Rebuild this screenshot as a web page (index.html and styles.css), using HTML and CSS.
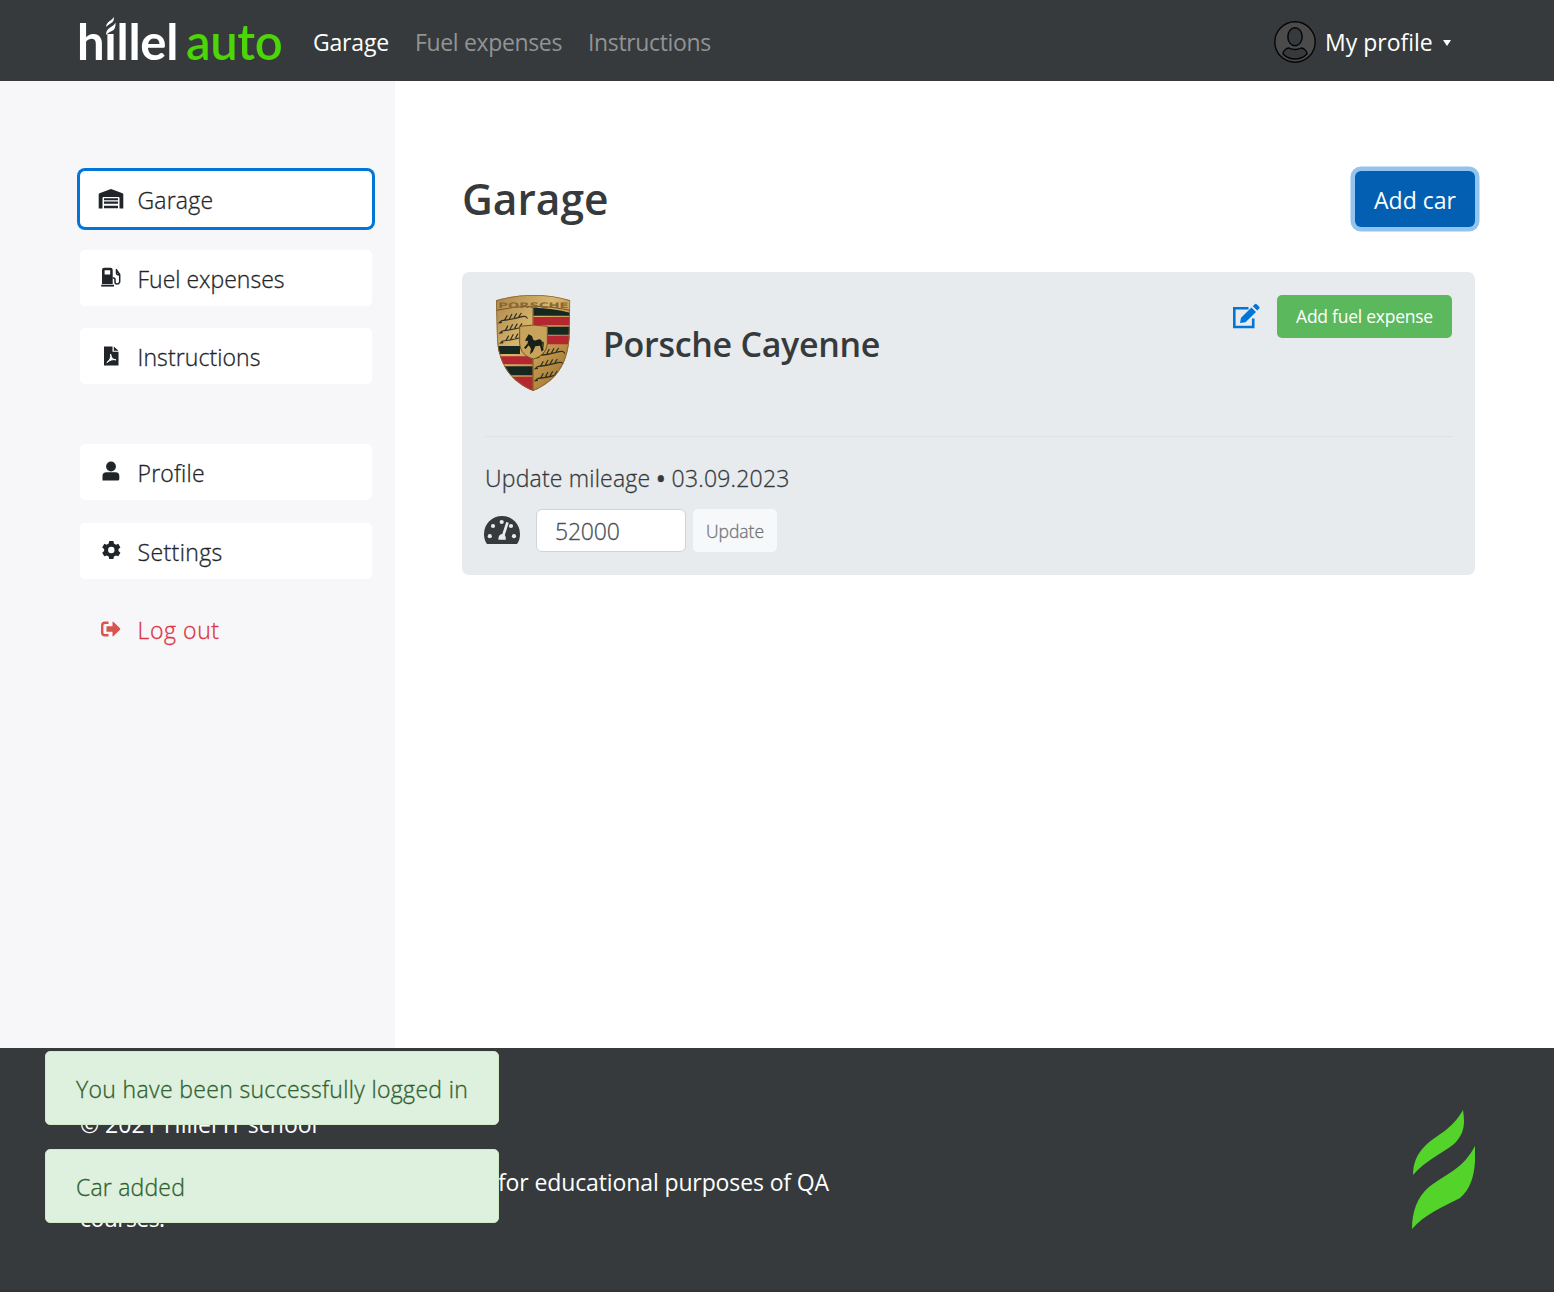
FILE: index.html
```html
<!DOCTYPE html>
<html lang="en">
<head>
<meta charset="utf-8">
<title>Hillel auto</title>
<link rel="stylesheet" href="styles.css">
</head>
<body>
<header class="header">
  <a class="logo"><span class="logo-name">hıllel</span><span class="logo-auto">auto</span>
    <svg class="logo-flame" viewBox="0 0 63 119"><path d="M51 0C40 20 24 25 13 36C5 44 1 53 1 65C14 50 31 43 42 34C53 23 53 13 51 0ZM63 36C51 59 35 63 17 77C5 87 0 102 0 119C13 104 31 97 48 88C62 76 64 56 63 36Z"/></svg>
  </a>
  <nav class="nav"><a class="nav-link active n1">Garage</a><a class="nav-link n2">Fuel expenses</a><a class="nav-link n3">Instructions</a></nav>
  <button class="profile">
    <svg class="avatar" viewBox="0 0 42 42"><circle cx="21" cy="21" r="20.2" fill="#4b4b4b"/><g fill="#373a3c"><ellipse cx="21" cy="15.8" rx="7.2" ry="9"/><path d="M15 27C18 29 24 29 27 27C30 27 33 30 33 33C30 36 26 38 21 38S12 36 9 33C9 30 12 27 15 27Z"/></g></svg>
    <span class="profile-name">My profile</span><i class="caret"></i>
  </button>
</header>
<div class="body">
  <aside class="sidebar">
    <nav class="side-group">
      <a class="side-item selected"><svg class="icon" viewBox="0 0 26 20"><path fill-rule="evenodd" d="M13 0L24.5 4.3Q25.3 4.6 25.3 5.5V19.5H21.5V9Q21.5 8 20.5 8H5.500Q4.500 8 4.500 9V19.500H.7V5.500Q.7 4.600 1.500 4.300ZM6 9.200H20V11.300H6ZM6 12.600H20V14.800H6ZM6 16.700H20V19.300H6Z"/></svg><span class="s1">Garage</span></a>
      <a class="side-item"><svg class="icon" viewBox="0 0 26 20"><path fill-rule="evenodd" d="M4 17V3Q4 .7 6.200.7H12.500Q14.700.7 14.700 3V17ZM6.600 3.200V7.500H12.200V3.200Z"/><path d="M3.200 17.700H16V19.600H3.200Z"/><path fill="none" stroke="currentColor" stroke-width="1.500" d="M14.500 11H15.500Q17 11 17 13V15Q17 17 19 17T21.700 15V7.500L18 2.200M18.500 3V6Q18.500 8 21.500 8"/></svg><span class="s2">Fuel expenses</span></a>
      <a class="side-item"><svg class="icon" viewBox="0 0 26 20"><path d="M6 .5H14.500V5.800H20.500V19.500H6ZM15.800.5L20.500 4.700H15.800Z"/><path class="ink" d="M12.600 8C13.200 11 14 13.200 18 13.800C14.500 13.200 12 14 8.800 16.600C11.500 14.500 13.300 11.500 12.600 8Z"/></svg><span class="s3">Instructions</span></a>
    </nav>
    <nav class="side-group">
      <a class="side-item"><svg class="icon" viewBox="0 0 26 20"><circle cx="13" cy="5.500" r="4.900"/><path d="M4.500 19.500V15Q4.500 11.300 8.500 11.300H17.300Q21.300 11.300 21.300 15V18Q21.300 19.500 19.700 19.500Z"/></svg><span class="s4">Profile</span></a>
      <a class="side-item"><svg class="icon" viewBox="0 0 26 20"><path fill-rule="evenodd" d="M11.200 1H15.400L15.900 3.500L18 4.700L20.300 3.800L22.400 7.400L20.500 9V11L22.400 12.700L20.300 16.200L18 15.400L15.900 16.600L15.400 19H11.200L10.700 16.600L8.600 15.400L6.300 16.200L4.200 12.700L6.100 11V9L4.200 7.400L6.300 3.800L8.600 4.700L10.700 3.500ZM13.300 6.800A3.200 3.200 0 1 0 13.300 13.200A3.200 3.200 0 1 0 13.300 6.800Z"/></svg><span class="s5">Settings</span></a>
      <a class="side-item logout"><svg class="icon" viewBox="0 0 26 20"><path fill="none" stroke="currentColor" stroke-width="2.400" d="M10.500 3.800H7Q4.200 3.800 4.200 6.600V13.400Q4.200 16.200 7 16.200H10.500"/><path d="M8.500 7.300H14.500V3.200Q14.500 2 15.600 2.900L22 9.300Q22.600 10 22 10.700L15.600 17.100Q14.500 18 14.500 16.800V12.700H8.500Z"/></svg><span class="s6">Log out</span></a>
    </nav>
  </aside>
  <main class="main">
    <div class="heading"><h1>Garage</h1><button class="btn-add">Add car</button></div>
    <section class="card">
      <div class="car">
        <svg class="crest" viewBox="15 45 288 288">
          <defs>
            <linearGradient id="gold" x1="0" y1="0" x2="1" y2="1"><stop offset="0" stop-color="#a98248"/><stop offset=".4" stop-color="#d8b56d"/><stop offset=".7" stop-color="#b88d43"/><stop offset="1" stop-color="#8a642b"/></linearGradient>
            <clipPath id="shield"><path d="M48 61Q100 45 160 45T271 61L268 177C263 250 229 305 159 333C91 305 55 250 51 177Z"/></clipPath>
            <path id="antler" d="M0 12Q35 8 62 0Q75-4 78 6M10 10L18-4M24 7L32-8M38 4L46-10M52 1L60-11M0 12L-6 18L2 17" fill="none" stroke="#2f3020" stroke-width="3.600"/>
          </defs>
          <g clip-path="url(#shield)">
            <path fill="url(#gold)" d="M40 40H280V340H40Z"/>
            <path fill="#162722" d="M160 83Q220 84 270 98V107H160ZM203 140H270V164H203ZM52 198H120V222H52ZM60 259H158V286H75Z"/>
            <path fill="#b42731" d="M160 111H270V136H160ZM200 167H270V193H200ZM54 229H158V253H60ZM80 290H158V330H100Z"/>
            <use href="#antler" x="64" y="110"/><use href="#antler" x="66" y="141"/><use href="#antler" x="68" y="171"/>
            <use href="#antler" x="176" y="215"/><use href="#antler" x="172" y="248"/><use href="#antler" x="172" y="284"/>
            <path fill="none" stroke="#765426" stroke-width="3" d="M48 91Q160 66 271 91M159 82V333"/>
            <path fill="#c8a35c" stroke="#72501f" stroke-width="3" d="M119 139Q160 131 202 139V190C200 215 183 231 160 237C136 231 121 215 119 190Z"/>
            <path d="M137 178L146 163L156 168L160 180Q168 183 176 178Q188 178 186 192L191 209L185 215L180 197L166 199L158 216L150 223L153 206L146 196L137 207L132 203L143 190L144 182L136 184ZM186 186Q194 178 190 205Z" fill="#172019"/>
            <path fill="none" stroke="#8a6732" stroke-width="5" d="M48 61Q100 45 160 45T271 61L268 177C263 250 229 305 159 333C91 305 55 250 51 177Z"/>
          </g>
          <text x="55" y="85" textLength="211" lengthAdjust="spacingAndGlyphs" class="crest-text">PORSCHE</text>
        </svg>
        <h2>Porsche Cayenne</h2>
        <div class="actions"><svg class="edit" viewBox="0 0 28 26"><path fill="none" stroke="currentColor" stroke-width="2.600" d="M16.500 5.300H2.300V24H21.200V15.500"/><path d="M9 14.800L19.500 4.400L24 8.900L13.500 19.300L8 20ZM20.800 3.200L22.800 1.200Q23.700.4 24.600 1.200L27.200 3.800Q28 4.700 27.200 5.600L25.200 7.600Z"/></svg><button class="btn-fuel">Add fuel expense</button></div>
      </div>
      <div class="mileage">
        <p>Update mileage <span class="dot">•</span> 03.09.2023</p>
        <form class="form">
          <svg class="gauge" viewBox="0 0 36 28"><path d="M3 28Q0 24 0 18A18 18 0 0 1 36 18Q36 24 33 28Z"/><g class="dots"><circle cx="5.800" cy="20.200" r="2.100"/><circle cx="9" cy="10" r="2.100"/><circle cx="17.700" cy="6" r="2.100"/><circle cx="27" cy="10" r="2.100"/><circle cx="30" cy="20.200" r="2.100"/><path d="M22.200 6L24.800 6.700L20.800 19Q22 20.500 21.800 23.800H14.400Q14 18.500 18.300 17.900Z"/></g></svg>
          <input class="miles" value="52000"><button class="btn-update" type="button">Update</button>
        </form>
      </div>
    </section>
  </main>
</div>
<footer class="footer">
  <div class="footer-text"><p class="f1">© 2021 Hillel IT school</p><p class="f2">for educational purposes of QA</p><p class="f3">courses.</p></div>
  <svg class="flame" viewBox="0 0 63 119"><path d="M51 0C40 20 24 25 13 36C5 44 1 53 1 65C14 50 31 43 42 34C53 23 53 13 51 0ZM63 36C51 59 35 63 17 77C5 87 0 102 0 119C13 104 31 97 48 88C62 76 64 56 63 36Z"/></svg>
</footer>
<div class="toasts"><div class="toast t1"><span>You have been successfully logged in</span></div><div class="toast t2"><span>Car added</span></div></div>
</body>
</html>
```
FILE: styles.css
```css
* { box-sizing: border-box; }
body { margin: 0; width: 1554px; height: 1292px; overflow: hidden; display: flex; flex-direction: column; background: #fff; color: #212529; font: 400 23px/36px "Open Sans", "Noto Sans", sans-serif; }
h1, h2, p { margin: 0; }
button, input { font-family: inherit; border: 0; padding: 0; margin: 0; white-space: nowrap; }
svg { flex: none; fill: currentColor; }
span, a { white-space: nowrap; }

.header { height: 81px; flex: none; padding: 0 103px 0 80px; display: flex; align-items: center; background: #373a3c; color: #fff; }
.logo { position: relative; width: 233px; height: 60px; flex: none; display: flex; font: 49px/60px Lato, sans-serif; }
.logo-name { width: 106px; font-weight: 700; letter-spacing: -.3px; margin-left: -3px; }
.logo-auto { color: #4cd507; font-weight: 600; letter-spacing: -.4px; padding-left: 3px; }
.logo-flame { position: absolute; left: 26px; top: 6px; width: 9.500px; height: 18px; }
.nav { display: flex; gap: 26px; flex: 1; padding-top: 3px; }
.nav-link { color: #919394; letter-spacing: -.35px; }
.nav-link.active { color: #fff; letter-spacing: -.2px; }
.n1 { width: 76px; }
.n2 { width: 147px; }
.profile { display: flex; align-items: center; background: none; color: #fff; font-size: 23px; line-height: 36px; }
.avatar { width: 42px; height: 42px; stroke: #050505; stroke-width: 1.400; margin-top: 3px; }
.profile-name { width: 108px; margin: 3px 10px 0 9px; text-align: left; }
.caret { border: 4px solid transparent; border-top: 6px solid #fff; border-bottom: 0; margin-top: 4px; }

.body { height: 967px; flex: none; display: flex; }
.sidebar { width: 395px; padding: 90px 23px 0 80px; background: #f7f7fa; display: flex; flex-direction: column; gap: 59.800px; }
.side-group { display: flex; flex-direction: column; gap: 22.600px; }
.side-item { height: 56px; border-radius: 5px; background: #fff; display: flex; align-items: center; font-weight: 300; padding: 2px 18px 0 17.500px; gap: 14px; }
.side-item span, .mileage, .miles, .btn-update, .toast { -webkit-text-stroke: .3px currentColor; }
.side-item.selected { box-shadow: 0 0 0 3px #0275d8; }
.icon { width: 26px; height: 20px; margin-top: -3px; }
.s1 { letter-spacing: .2px; }
.s3 { letter-spacing: .1px; }
.s4 { letter-spacing: .2px; }
.s5 { letter-spacing: .4px; }
.s6 { letter-spacing: .6px; }
.ink { fill: #fff; stroke: #fff; stroke-width: 1; }
.side-item.logout { background: none; color: #dc3545; }
.logout .icon { color: #d9534f; }

.main { flex: 1; padding: 90px 79px 0 67px; }
.heading { display: flex; justify-content: space-between; height: 101px; }
h1 { font-size: 42.500px; line-height: 55px; font-weight: 600; color: #373a3c; }
.btn-add { width: 120px; height: 56px; border-radius: 6px; background: #025fb1; box-shadow: 0 0 0 4.500px #93c4ee; color: #fff; font-size: 23px; padding-top: 2px; }
.card { height: 303px; background: #e7ebee; border-radius: 7px; padding: 23px; color: #373a3c; }
.car { height: 142px; display: flex; border-bottom: 1px solid #dde1e4; }
.crest { width: 96px; height: 96px; }
.crest-text { font: 700 23px "DejaVu Sans", sans-serif; fill: #8a6732; }
h2 { margin-left: 22px; font-size: 34px; line-height: 98px; font-weight: 600; flex: 1; letter-spacing: -.3px; }
.actions { display: flex; }
.edit { width: 28px; height: 26px; color: #0275d8; margin: 8px 17px 0 0; }
.btn-fuel { width: 175px; height: 43px; border-radius: 5px; background: #5cb85c; color: #fff; font-size: 17.500px; letter-spacing: -.25px; padding-bottom: 2px; }
.mileage p { padding-top: 23px; height: 72px; letter-spacing: .2px; font-weight: 300; }
.dot { font-family: "Noto Sans", sans-serif; font-weight: 600; }
.form { display: flex; }
.gauge { width: 36px; height: 28px; margin: 7px 16px 0 -1px; }
.dots { fill: #e7ebee; }
.miles { width: 150px; height: 43px; border: 1px solid #ced4da; border-radius: 6px; padding: 1px 18px 0; color: #495057; font-size: 23px; font-weight: 300; background: #fff; letter-spacing: -.2px; }
.btn-update { width: 84px; height: 43px; margin-left: 7px; border-radius: 5px; background: #f7f8fa; color: #737578; font-size: 17.500px; font-weight: 300; }

.footer { height: 244px; flex: none; display: flex; justify-content: space-between; padding: 60px 79px 0 80px; background: #373a3c; color: #fff; border-bottom: 2px solid #313336; }
.f1 { height: 56px; margin-top: -2px; }
.f2 { height: 36px; margin: 2px 0 0 418px; letter-spacing: -.12px; }
.f3 { letter-spacing: -.6px; }
.flame { width: 63px; height: 119px; color: #54d32b; margin-top: 2px; }
.toasts { position: absolute; left: 45px; top: 1051px; display: flex; flex-direction: column; gap: 24px; }
.toast { width: 454px; height: 74px; border: 1px solid #d0e9c6; border-radius: 5px; background: #def0de; color: #2f602f; padding: 19px 30px 0; font-weight: 300; letter-spacing: .34px; }
.t2 { letter-spacing: .2px; }
```
